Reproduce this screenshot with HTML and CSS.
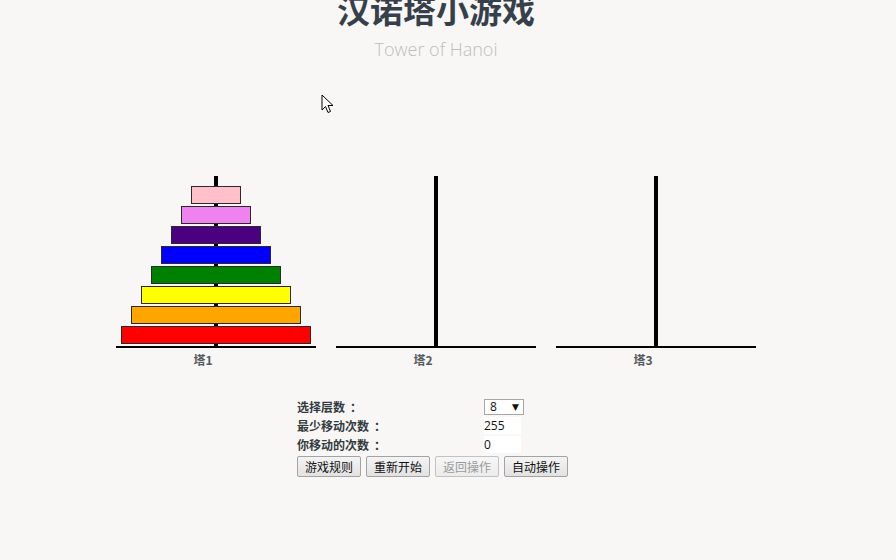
FILE: index.html
```html
<!DOCTYPE html>
<html lang="zh-CN">
<head>
<meta charset="utf-8">
<title>汉诺塔小游戏</title>
<link rel="stylesheet" href="styles.css">
</head>
<body>
<div class="wrap">
  <h1 class="title">汉诺塔小游戏</h1>
  <p class="subtitle">Tower of Hanoi</p>

  <div class="towers">
    <div class="tower">
      <div class="stage">
        <div class="disk d8"></div>
        <div class="disk d7"></div>
        <div class="disk d6"></div>
        <div class="disk d5"></div>
        <div class="disk d4"></div>
        <div class="disk d3"></div>
        <div class="disk d2"></div>
        <div class="disk d1"></div>
      </div>
      <div class="tower-label">塔1</div>
    </div>
    <div class="tower">
      <div class="stage"></div>
      <div class="tower-label">塔2</div>
    </div>
    <div class="tower">
      <div class="stage"></div>
      <div class="tower-label">塔3</div>
    </div>
  </div>

  <div class="controls">
    <div class="info">
      <div class="info-label">选择层数<span class="colon">：</span></div>
      <div class="info-value"><div class="select"><span>8</span><span class="arrow">▼</span></div></div>
      <div class="info-label">最少移动次数<span class="colon">：</span></div>
      <div class="info-value"><div class="field">255</div></div>
      <div class="info-label">你移动的次数<span class="colon">：</span></div>
      <div class="info-value"><div class="field">0</div></div>
    </div>
    <div class="buttons">
      <button class="btn">游戏规则</button>
      <button class="btn">重新开始</button>
      <button class="btn" disabled>返回操作</button>
      <button class="btn">自动操作</button>
    </div>
  </div>
</div>

<svg class="cursor" width="13" height="20" viewBox="0 0 13 20" aria-hidden="true">
  <path d="M1 1 L1 16 L4.5 12.5 L7 18.5 L9.5 17.5 L7 11.5 L12 11.5 Z" fill="#fff" stroke="#000" stroke-width="1" stroke-linejoin="miter"/>
</svg>
</body>
</html>
```

FILE: styles.css
```css
html, body {
  margin: 0;
  padding: 0;
}

body {
  background: #f8f7f5;
  font-family: "Noto Sans CJK SC", "Noto Sans", sans-serif;
  height: 560px;
  overflow: hidden;
}

.wrap {
  width: 640px;
  margin-left: 116px;
}

.title {
  margin: -7px 0 0;
  height: 33px;
  font-size: 33px;
  line-height: 33px;
  font-weight: 700;
  color: #36404a;
  text-align: center;
}

.subtitle {
  margin: 11px 0 0;
  font-family: "Open Sans", "Noto Sans", sans-serif;
  font-weight: 300;
  font-size: 18px;
  line-height: 24px;
  color: #bdbdbd;
  text-align: center;
}

.towers {
  display: flex;
  gap: 20px;
  margin-top: 115px;
}

.tower {
  width: 200px;
}

.stage {
  height: 170px;
  border-bottom: 2px solid #000;
  display: flex;
  flex-direction: column;
  justify-content: flex-end;
  align-items: center;
  background: linear-gradient(#000, #000) center top / 4px 100% no-repeat;
}

.disk {
  box-sizing: border-box;
  height: 18px;
  margin-bottom: 2px;
  border: 1px solid #2a2a2a;
}

.d1 { width: 190px; background: #ff0000; }
.d2 { width: 170px; background: #ffa500; }
.d3 { width: 150px; background: #ffff00; }
.d4 { width: 130px; background: #008000; }
.d5 { width: 110px; background: #0000ff; }
.d6 { width: 90px;  background: #4b0082; }
.d7 { width: 70px;  background: #ee82ee; }
.d8 { width: 50px;  background: #ffc0cb; }

.tower-label {
  margin-top: 4px;
  padding-right: 26px;
  font-size: 12px;
  line-height: 16px;
  font-weight: 700;
  color: #555a60;
  text-align: center;
}

.controls {
  margin-top: 29px;
  margin-left: 181px;
}

.info {
  display: grid;
  grid-template-columns: 187px auto;
  grid-auto-rows: 19px;
  align-items: center;
}

.info-label {
  font-size: 12px;
  font-weight: 700;
  color: #333a40;
  line-height: 16px;
}

.colon {
  padding-left: 5px;
}

.info-value {
  font-family: "Open Sans", "Noto Sans", sans-serif;
  font-size: 12px;
  color: #111;
}

.select {
  box-sizing: border-box;
  width: 40px;
  height: 16px;
  border: 1px solid #a6a6a6;
  background: #fff;
  display: flex;
  justify-content: space-between;
  align-items: center;
  padding: 0 4px 0 5px;
  line-height: 14px;
}

.arrow {
  font-family: "DejaVu Sans", sans-serif;
  font-size: 9px;
  color: #111;
}

.field {
  width: 37px;
  height: 17px;
  background: #fff;
  line-height: 17px;
  padding-left: 0;
}

.buttons {
  display: flex;
  gap: 5px;
  margin-top: 2px;
}

.btn {
  box-sizing: border-box;
  width: 64px;
  height: 21px;
  padding: 0;
  border: 1px solid #a3a3a3;
  border-radius: 2px;
  background: linear-gradient(#f4f4f4, #e2e2e2);
  font-family: "Noto Sans CJK SC", sans-serif;
  font-size: 12px;
  line-height: 19px;
  color: #111;
}

.btn:disabled {
  color: #9a9a9a;
  border-color: #c2c2c2;
  background: linear-gradient(#f6f6f6, #ececec);
}

.cursor {
  position: absolute;
  left: 321px;
  top: 94px;
}
```
